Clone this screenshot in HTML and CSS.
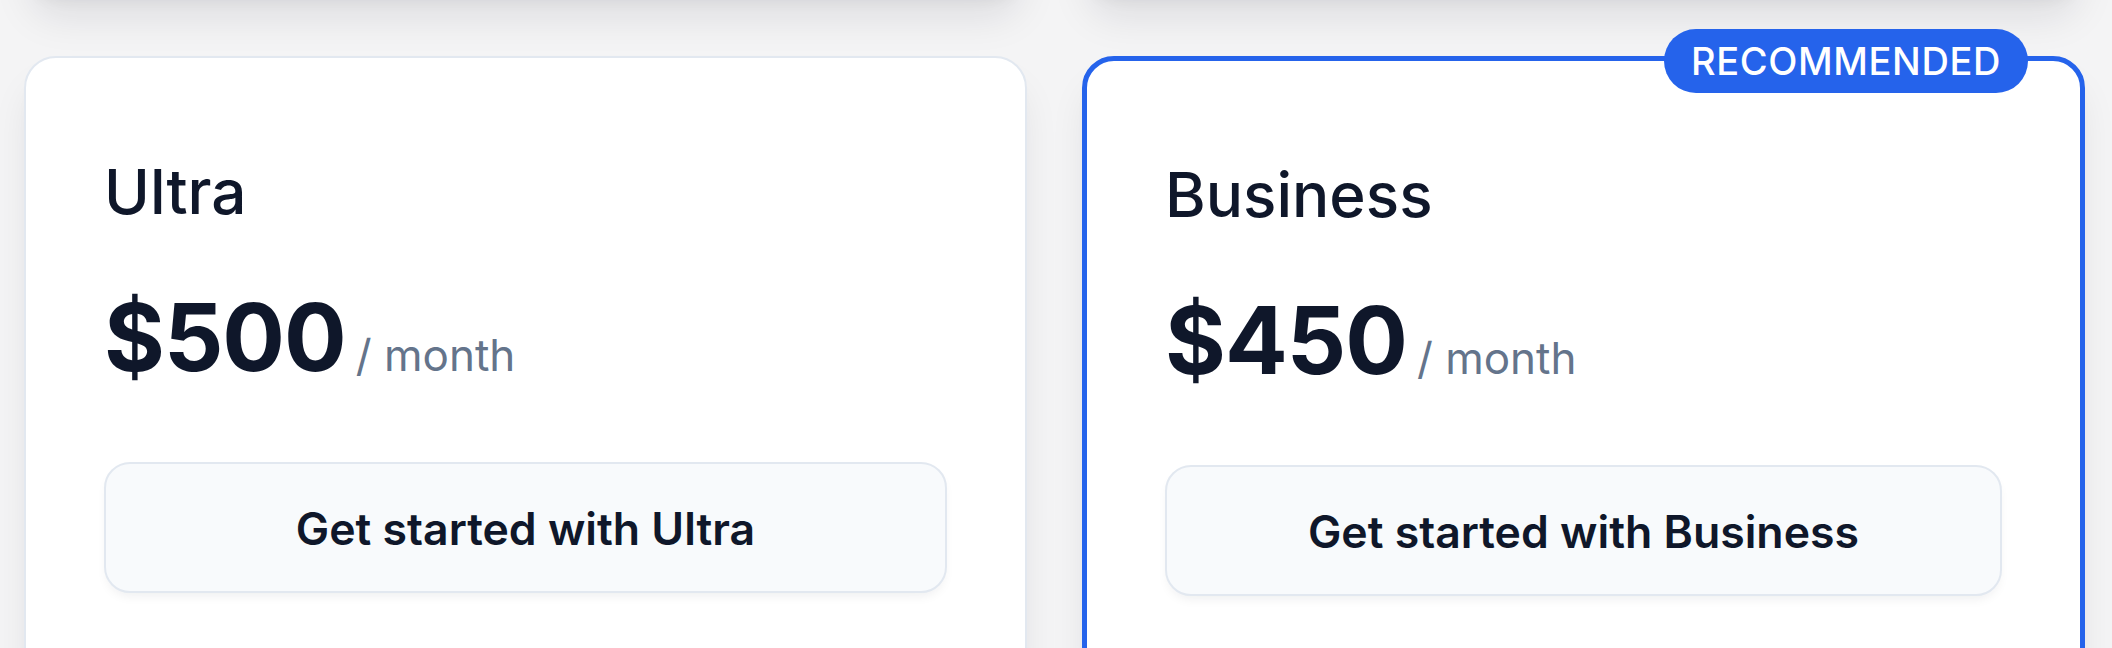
FILE: index.html
```html
<!DOCTYPE html>
<html lang="en">
<head>
<meta charset="utf-8">
<title>Pricing</title>
<link rel="stylesheet" href="styles.css">
</head>
<body>
<main class="plans">
  <div class="card card-upper" aria-hidden="true"></div>
  <div class="card card-upper" aria-hidden="true"></div>

  <section class="card">
    <h2 class="plan-name">Ultra</h2>
    <div class="price-row">
      <span class="price">$500</span>
      <span class="period">/ month</span>
    </div>
    <button class="cta">Get started with Ultra</button>
  </section>

  <section class="card card-featured">
    <span class="badge">RECOMMENDED</span>
    <h2 class="plan-name">Business</h2>
    <div class="price-row">
      <span class="price">$450</span>
      <span class="period">/ month</span>
    </div>
    <button class="cta">Get started with Business</button>
  </section>
</main>
</body>
</html>
```
FILE: styles.css
```css
* { box-sizing: border-box; }

html, body {
  margin: 0;
  padding: 0;
  background: #f4f4f5;
  overflow: hidden;
}

body {
  font-family: Inter, "Noto Sans", "Liberation Sans", sans-serif;
  color: #0f172a;
}

.plans {
  display: grid;
  grid-template-columns: 1fr 1fr;
  grid-template-rows: 300px auto;
  column-gap: 55px;
  row-gap: 58px;
  padding: 0 27px 0 24px;
  margin-top: -302px;
}

.card {
  position: relative;
  background: #ffffff;
  border: 2px solid #e2e8f0;
  border-radius: 32px;
  padding: 103px 80px 80px 78px;
  box-shadow: 0 26px 40px -8px rgba(15, 23, 42, 0.10), 0 10px 16px -10px rgba(15, 23, 42, 0.08);
}

.card-upper {
  padding: 0;
}

.card-featured {
  border: 5px solid #2563eb;
}

.badge {
  position: absolute;
  top: -32px;
  right: 52px;
  height: 64px;
  line-height: 64px;
  padding: 0 27px;
  border-radius: 32px;
  background: #2563eb;
  color: #ffffff;
  font-size: 38px;
  font-weight: 500;
  letter-spacing: 0.6px;
}

.plan-name {
  margin: 0;
  font-size: 62px;
  line-height: 1;
  font-weight: 500;
  color: #0f172a;
}

.price-row {
  display: flex;
  align-items: baseline;
  margin-top: 68px;
}

.price {
  font-size: 93px;
  line-height: 1;
  font-weight: 700;
  letter-spacing: -1px;
  color: #0f172a;
}

.period {
  margin-left: 10px;
  font-size: 44px;
  line-height: 1;
  font-weight: 400;
  color: #64748b;
}

.cta {
  display: flex;
  align-items: center;
  justify-content: center;
  width: calc(100% + 2px);
  height: 131px;
  margin-top: 78px;
  padding: 4px 0 0;
  background: #f8fafc;
  border: 2px solid #e2e8f0;
  border-radius: 26px;
  box-shadow: 0 6px 12px -4px rgba(15, 23, 42, 0.08);
  font-family: inherit;
  font-size: 44.6px;
  line-height: 1;
  font-weight: 600;
  color: #0f172a;
}
```
